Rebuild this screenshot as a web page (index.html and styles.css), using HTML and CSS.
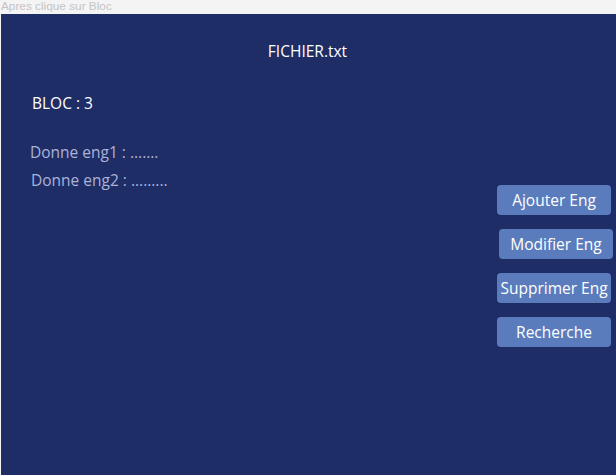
FILE: index.html
```html
<!DOCTYPE html>
<html>
<head>
<meta charset="utf-8">
<link rel="stylesheet" href="styles.css">
</head>
<body>
<div class="titlebar">Apres clique sur Bloc</div>
<div class="panel">
  <div class="title">FICHIER.txt</div>
  <div class="content">
    <div class="left">
      <div class="bloc">BLOC : 3</div>
      <div class="data d1">Donne eng1 : .......</div>
      <div class="data d2">Donne eng2 : .........</div>
    </div>
    <div class="actions">
      <button class="btn">Ajouter Eng</button>
      <button class="btn shift">Modifier Eng</button>
      <button class="btn">Supprimer Eng</button>
      <button class="btn">Recherche</button>
    </div>
  </div>
</div>
</body>
</html>
```
FILE: styles.css
```css
html, body {
  margin: 0;
  padding: 0;
  height: 100%;
}
body {
  background: #f4f4f4;
  display: flex;
  flex-direction: column;
  font-family: "Open Sans", "Noto Sans", sans-serif;
  overflow: hidden;
}
.titlebar {
  height: 14px;
  line-height: 12px;
  font-family: "Liberation Sans", Arial, sans-serif;
  font-size: 11.8px;
  color: #c4c4c4;
  padding-left: 1px;
}
.panel {
  flex: 1;
  margin-left: 1px;
  background: #1e2d66;
  display: flex;
  flex-direction: column;
}
.title {
  color: #ffffff;
  font-size: 15.5px;
  text-align: center;
  padding-top: 27px;
  line-height: 20px;
  padding-right: 2px;
}
.content {
  display: flex;
  justify-content: space-between;
}
.left {
  padding-left: 31px;
}
.bloc {
  color: #ffffff;
  font-size: 15.5px;
  line-height: 20px;
  margin-top: 32px;
}
.data {
  color: #acb2d8;
  font-size: 15.5px;
  line-height: 20px;
}
.d1 {
  margin-top: 29px;
  margin-left: -2px;
}
.d2 {
  margin-top: 8px;
  margin-left: -1px;
}
.actions {
  display: flex;
  flex-direction: column;
  gap: 14px;
  margin-top: 124px;
  padding-right: 5px;
}
.btn {
  width: 114px;
  height: 30px;
  border: none;
  border-radius: 4px;
  background: #5a7cbd;
  color: #ffffff;
  font-family: "Open Sans", "Noto Sans", sans-serif;
  font-size: 15.5px;
  padding: 0;
}
.shift {
  margin-left: 2px;
  margin-right: -2px;
}
```
